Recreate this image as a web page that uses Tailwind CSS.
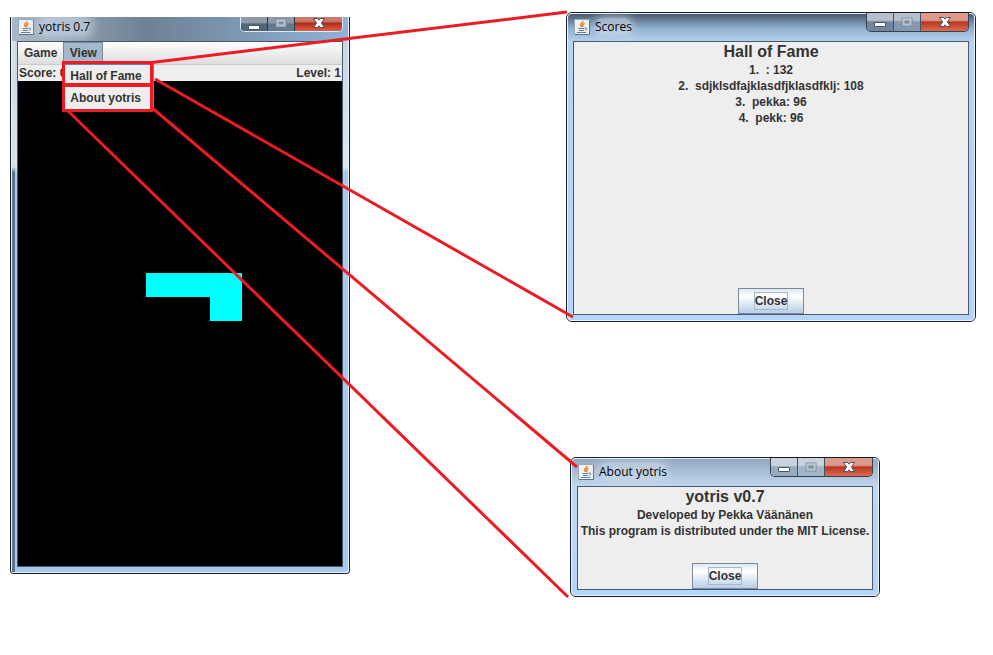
<!DOCTYPE html>
<html lang="en">
<head>
<meta charset="utf-8">
<title>yotris 0.7</title>
<script src="https://cdn.jsdelivr.net/npm/@tailwindcss/browser@4"></script>
</head>
<body class="relative min-h-screen overflow-hidden bg-white font-['Liberation_Sans',Arial,sans-serif] text-xs font-bold text-[#333333]">

<svg class="hidden" aria-hidden="true">
  <defs>
    <symbol id="java" viewBox="0 0 16 16">
      <rect x=".5" y=".5" width="15" height="15" fill="#eef1f4" stroke="#9aa7b5"/>
      <path d="M1 15.5h14.5V1" fill="none" stroke="#5f6f80"/>
      <path d="M9 2c.6 1.600-3 2.400-2.400 4 .3.7 1 1.100 1 1.900M10.600 4.300c-1.500.6-2.400 1.300-1.900 2.200.4.6.3 1-.2 1.500" fill="none" stroke="#ee7d14" stroke-width="1.400"/>
      <path d="M4.500 9.500h6M5 11.500h5M2.800 13.500h9.400M10.800 9c2.400-.6 2.600 1.600.2 2.500" fill="none" stroke="#5f7f9e" stroke-width="1"/>
    </symbol>
    <symbol id="min" viewBox="0 0 14 12">
      <rect x="1.500" y="7.500" width="11" height="4" rx=".5" fill="#fff" stroke="#4a5563"/>
    </symbol>
    <symbol id="max" viewBox="0 0 14 12">
      <rect x="2" y="2" width="10" height="8" fill="none" stroke="#7f8c99" stroke-width="1"/>
      <rect x="3.500" y="3.500" width="7" height="5" fill="#7e8c9a" stroke="#bac5cf" stroke-width="2"/>
    </symbol>
    <symbol id="x" viewBox="0 0 14 12">
      <path d="M1.500 1.500h4L7 3.200l1.500-1.700h4L9.400 6l3.100 4.500h-4L7 8.800l-1.500 1.700h-4L4.600 6z" fill="#fff" stroke="#4a4f5e" stroke-width="1"/>
    </symbol>
  </defs>
</svg>

<!-- Game window -->
<main class="absolute left-[10px] top-[17px] w-[340px] rounded-b border border-t-0 border-[#171b24] bg-[#a9c7e8]">
  <div class="flex rounded-b-[3px] border border-t-0 border-[#e8f3ff] bg-linear-to-b from-[#c3d3e4] from-0% via-[#dce6f0] via-27% to-[#a9c8ea] to-28%">
    <div class="w-[3px] bg-linear-to-b from-[#d3dfea] from-27% to-[#5b7590] to-28%"></div>
    <div class="min-w-0 flex-1 pr-[5px] pb-[5px] pl-[2px]">
      <header class="-mr-[5px] -ml-[5px] flex h-6 items-start overflow-hidden bg-linear-to-r from-[#a9b9c9] via-[#6f8194] via-40% to-[#8fb3d9] pr-[5px] pl-1.5">
        <svg class="mt-[2px] h-4 w-4"><use href="#java"/></svg>
        <h1 class="ml-[5px] flex-1 font-['Open_Sans','Noto_Sans',sans-serif] text-xs leading-5 font-normal text-black"><span class="rounded-full bg-[#ccd9e7]/60 shadow-[0_0_10px_4px_#ccd9e799]">yotris 0.7</span></h1>
        <div class="flex h-[15px] overflow-hidden rounded-b-[5px] border border-t-0 border-[#dfe9f3] bg-[#38424f]">
          <button aria-label="Minimize" class="flex w-[27px] items-center justify-center border-r border-[#2d3744] bg-linear-to-b from-[#8d9aa9] from-40% to-[#536579] to-50%"><svg class="h-3 w-3.5"><use href="#min"/></svg></button>
          <button aria-label="Maximize" class="flex w-[27px] items-start justify-center border-r border-[#2d3744] bg-linear-to-b from-[#8d9aa9] from-40% to-[#66788c] to-50%"><svg class="h-3 w-3.5"><use href="#max"/></svg></button>
          <button aria-label="Close window" class="flex w-[47px] items-start justify-center bg-linear-to-b from-[#c97a6d] from-30% via-[#b22a16] via-45% to-[#d9614a]"><svg class="h-3 w-3.5"><use href="#x"/></svg></button>
        </div>
      </header>
      <div class="border border-[#46586c] bg-[#eeeeee]">
        <nav class="flex h-[23px] border-b border-[#cccccc] bg-linear-to-b from-white to-[#dddddd]">
          <button class="px-1.5">Game</button>
          <div class="relative flex">
            <button class="w-10 border border-[#7a8a99] bg-[#a3b8cc]" aria-expanded="true">View</button>
            <div class="absolute top-[22px] left-0 z-10 flex w-[91px] flex-col border border-[#6382bf] bg-[#eeeeee]">
              <button class="h-[22px] px-1.5 text-left">Hall of Fame</button>
              <button class="h-[22px] px-1.5 text-left">About yotris</button>
            </div>
          </div>
        </nav>
        <div class="flex justify-between px-px leading-4"><span>Score: 0</span><span>Level: 1</span></div>
        <div class="h-[485px] bg-black pt-48 pl-32">
          <div class="h-6 w-24 bg-[#00ffff]"></div>
          <div class="ml-16 h-6 w-8 bg-[#00ffff]"></div>
        </div>
      </div>
    </div>
  </div>
</main>

<!-- Scores dialog -->
<section class="absolute left-[566px] top-[12px] w-[410px] rounded-md border border-[#171b24]">
  <div class="rounded-[5px] border border-[#e8f3ff] bg-linear-to-b from-[#b9d2ee] to-[#b3d5fa] px-[5px] pb-[5px]">
    <header class="-mx-[5px] flex h-[27px] items-start rounded-t bg-linear-to-b from-[#4a5a6e] via-[#93b2d4] via-55% to-[#b5d0ee] pr-[5px] pl-1.5">
      <svg class="mt-[5px] h-4 w-4"><use href="#java"/></svg>
      <h2 class="mt-[3px] ml-[5px] flex-1 font-['Open_Sans','Noto_Sans',sans-serif] text-xs leading-5 font-normal text-black"><span class="rounded-full bg-[#ccd9e7]/60 shadow-[0_0_8px_2px_#ccd9e799]">Scores</span></h2>
      <div class="-mt-px flex h-[19px] overflow-hidden rounded-b-[5px] border border-t-0 border-[#38424f]">
        <button aria-label="Minimize" class="flex w-[27px] items-end justify-center border-r border-[#46525f] bg-linear-to-b from-[#b5c0cc] from-40% to-[#71869d] to-50% pb-1"><svg class="h-3 w-3.5"><use href="#min"/></svg></button>
        <button aria-label="Maximize" class="flex w-[27px] items-center justify-center border-r border-[#46525f] bg-linear-to-b from-[#b5c0cc] from-40% to-[#8499af] to-50%"><svg class="h-3 w-3.5"><use href="#max"/></svg></button>
        <button aria-label="Close window" class="flex w-[47px] items-center justify-center bg-linear-to-b from-[#dc9a8d] from-40% via-[#b93420] via-50% to-[#dc6b50]"><svg class="h-3 w-3.5"><use href="#x"/></svg></button>
      </div>
    </header>
    <div class="flex min-h-[274px] flex-col items-center border border-[#46586c] bg-[#eeeeee] leading-4">
      <h3 class="text-base leading-5">Hall of Fame</h3>
      <p class="whitespace-pre">1.  : 132</p>
      <p class="whitespace-pre">2.  sdjklsdfajklasdfjklasdfklj: 108</p>
      <p class="whitespace-pre">3.  pekka: 96</p>
      <p class="whitespace-pre">4.  pekk: 96</p>
      <button class="mt-auto flex h-[26px] w-[66px] items-center justify-center border border-[#7a8a99] bg-linear-to-b from-[#dde8f3] via-white via-30% to-[#b8cfe5]"><span class="border border-[#a3b8cc]">Close</span></button>
    </div>
  </div>
</section>

<!-- About dialog -->
<section class="absolute left-[570px] top-[457px] w-[310px] rounded-md border border-[#171b24]">
  <div class="rounded-[5px] border border-[#e8f3ff] bg-linear-to-b from-[#c3d8ee] to-[#b3d5fa] px-[5px] pb-[5px]">
    <header class="-mx-[5px] flex h-[27px] items-start rounded-t bg-linear-to-b from-[#93a9c0] to-[#c2d7ee] pr-[5px] pl-1.5">
      <svg class="mt-[5px] h-4 w-4"><use href="#java"/></svg>
      <h2 class="mt-[3px] ml-[5px] flex-1 font-['Open_Sans','Noto_Sans',sans-serif] text-xs leading-5 font-normal text-black"><span class="rounded-full bg-[#ccd9e7]/60 shadow-[0_0_8px_2px_#ccd9e799]">About yotris</span></h2>
      <div class="-mt-px flex h-[19px] overflow-hidden rounded-b-[5px] border border-t-0 border-[#38424f]">
        <button aria-label="Minimize" class="flex w-[27px] items-end justify-center border-r border-[#46525f] bg-linear-to-b from-[#c8d3df] from-40% to-[#96abc0] to-50% pb-1"><svg class="h-3 w-3.5"><use href="#min"/></svg></button>
        <button aria-label="Maximize" class="flex w-[27px] items-center justify-center border-r border-[#46525f] bg-linear-to-b from-[#c8d3df] from-40% to-[#a2b5c9] to-50%"><svg class="h-3 w-3.5"><use href="#max"/></svg></button>
        <button aria-label="Close window" class="flex w-[47px] items-center justify-center bg-linear-to-b from-[#dc9a8d] from-40% via-[#b93420] via-50% to-[#dc6b50]"><svg class="h-3 w-3.5"><use href="#x"/></svg></button>
      </div>
    </header>
    <div class="flex min-h-[104px] flex-col items-center border border-[#46586c] bg-[#eeeeee] leading-4">
      <h3 class="text-base leading-5">yotris v0.7</h3>
      <p>Developed by Pekka Väänänen</p>
      <p class="whitespace-nowrap">This program is distributed under the MIT License.</p>
      <button class="mt-auto flex h-[26px] w-[66px] items-center justify-center border border-[#7a8a99] bg-linear-to-b from-[#dde8f3] via-white via-30% to-[#b8cfe5]"><span class="border border-[#a3b8cc]">Close</span></button>
    </div>
  </div>
</section>

<!-- Callout lines from menu items to their dialogs -->
<svg class="pointer-events-none absolute top-0 left-0 z-20" width="993" height="655" fill="none" stroke="#ed1c24" stroke-width="3" aria-hidden="true">
  <path d="M148 63L567 12M155 79L573 317M151 107L577 467M68 111L568 597"/>
  <path d="M63.500 62.500h88v22h-88zM63.500 85.500h88v25h-88z"/>
</svg>
</body>
</html>
